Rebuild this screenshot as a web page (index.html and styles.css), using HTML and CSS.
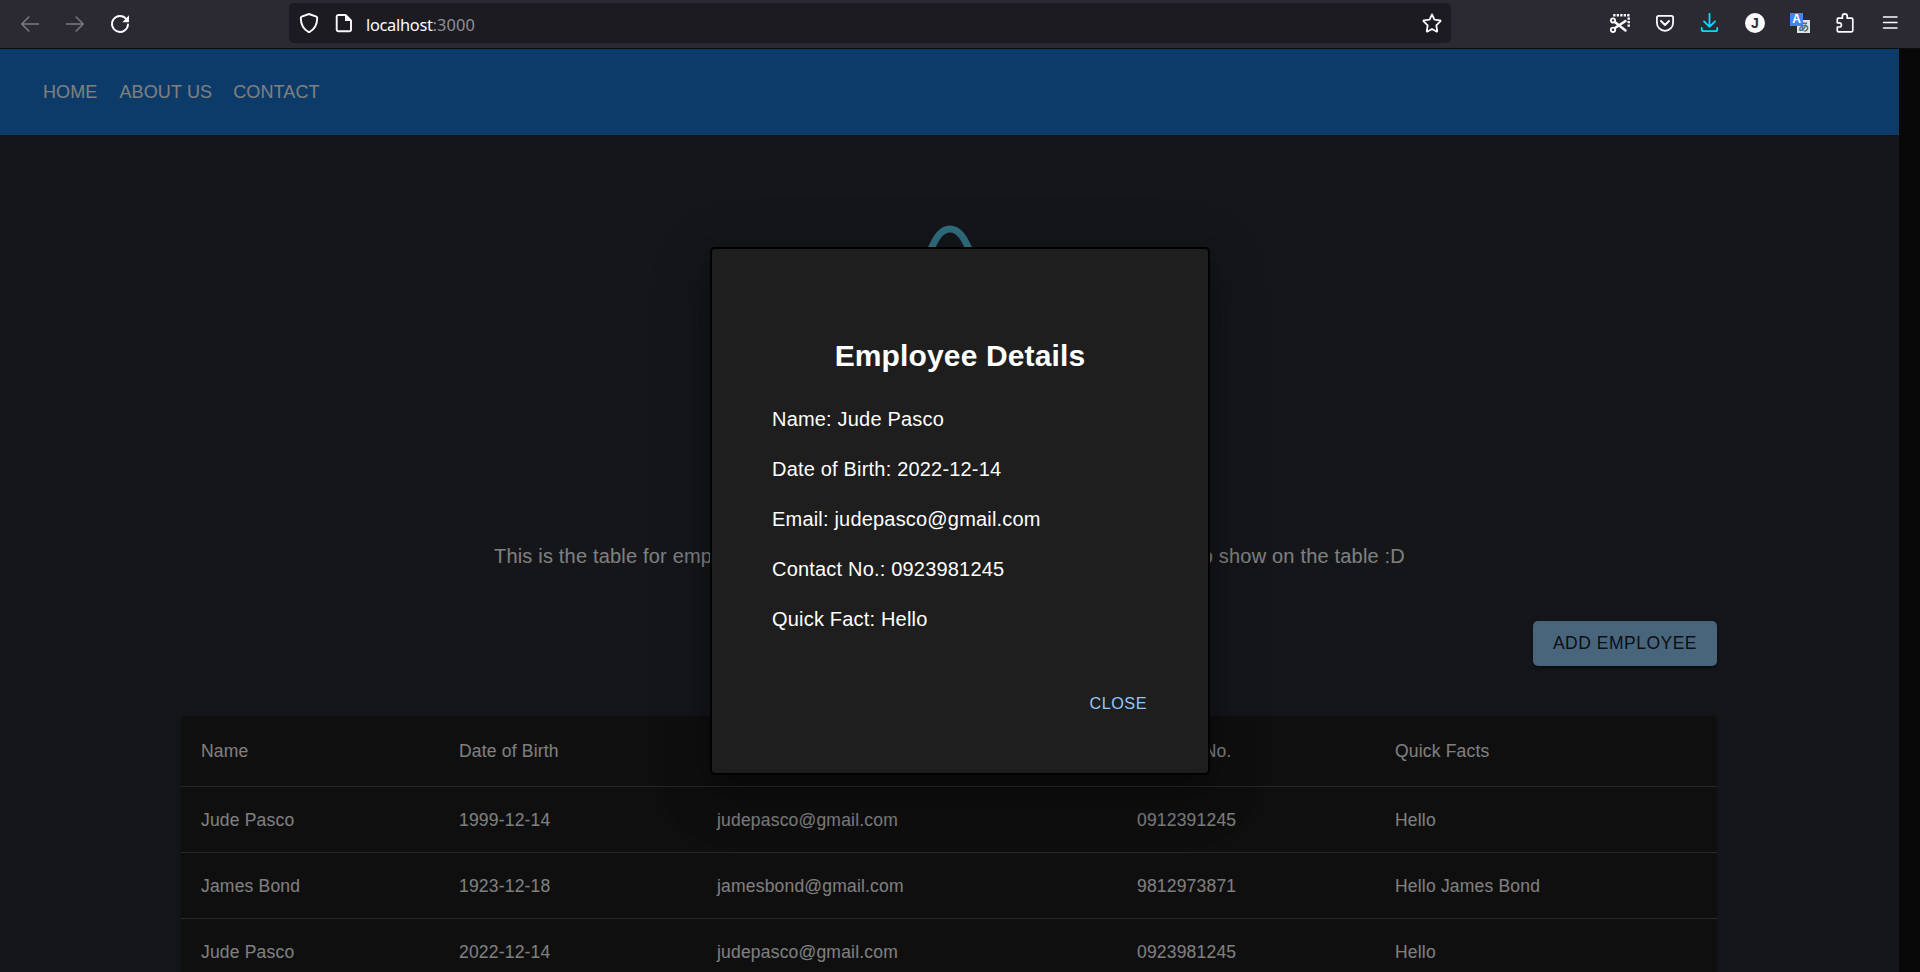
FILE: index.html
```html
<!DOCTYPE html>
<html lang="en">
<head>
<meta charset="utf-8">
<title>Employees</title>
<link rel="stylesheet" href="styles.css">
</head>
<body>
<header class="toolbar">
  <div class="nav-buttons">
    <svg class="icon dim" width="20" height="20" viewBox="0 0 20 20"><path d="M18.5 10H2M8.8 3L1.8 10l7 7"/></svg>
    <svg class="icon dim" width="20" height="20" viewBox="0 0 20 20"><path d="M1.5 10H18M11.2 3l7 7-7 7"/></svg>
    <svg class="icon" width="20" height="20" viewBox="0 0 20 20"><path d="M16.3 5A8 8 0 1 0 18 10.500" stroke-width="1.9"/><path d="M19 1.200v6.300a.8.8 0 0 1-.8.8H12.400z" fill="#fbfbfe" stroke="none"/></svg>
  </div>
  <div class="urlbar">
    <svg class="icon" width="20" height="20" viewBox="0 0 20 20"><path d="M10 1L17.400 3.600Q18.200 4 18.200 5C18.200 11.500 15.500 16.500 10 19.300C4.500 16.500 1.800 11.500 1.800 5Q1.800 4 2.600 3.600z" stroke-width="1.9"/></svg>
    <svg class="icon page-icon" width="20" height="20" viewBox="0 0 20 20"><path d="M4.500 2H11.500L17 7.500V16.500a1.800 1.800 0 0 1-1.800 1.800H4.500a1.800 1.800 0 0 1-1.800-1.800V3.800A1.800 1.800 0 0 1 4.500 2z" stroke-width="1.9"/><path d="M11 2v6h6z" fill="#fbfbfe" stroke="none"/></svg>
    <span class="url">localhost<span class="port">:3000</span></span>
    <svg class="icon star" width="20" height="20" viewBox="0 0 20 20"><path d="M10 1.400l2.400 5.200 5.600.8q1 .2.300 1l-4 4 .9 5.500q.1 1-.8.600L10 15.900l-4.400 2.600q-.9.400-.8-.6l.9-5.500-4-4q-.7-.8.300-1l5.600-.8z" stroke-width="1.8"/></svg>
  </div>
  <div class="actions">
    <svg class="icon" width="20" height="20" viewBox="0 0 20 20"><g stroke-width="1.900"><path d="M3.200 2.200H19.900" stroke-dasharray="2.300 1.200" stroke-linecap="butt" stroke-width="2.400"/><path d="M18.700 4.500v10" stroke-dasharray="2.300 1.200" stroke-linecap="butt" stroke-width="2.400"/><circle cx="3" cy="7.500" r="2.100"/><circle cx="3" cy="16.800" r="2.200"/></g><path d="M4.800 9l10.700 8.500M5 15L15.500 8" stroke-width="2.500"/></svg>
    <svg class="icon" width="20" height="20" viewBox="0 0 20 20"><path d="M3.500 2.900h13a1.600 1.600 0 0 1 1.600 1.600V9.700a8.100 8.100 0 0 1-16.200 0V4.500a1.600 1.600 0 0 1 1.600-1.600z" stroke-width="1.800"/><path d="M6 8l4 4 4-4" stroke-width="2"/></svg>
    <svg class="icon download" width="20" height="20" viewBox="0 0 20 20"><path d="M9.500 .8v13M4 8.300L9.500 13.800l5.500-5.500M1.700 14.800v1.400a2 2 0 0 0 2 2h11.600a2 2 0 0 0 2-2v-1.400" stroke-width="1.800"/></svg>
    <span class="avatar">J</span>
    <span class="translate"><span class="tr-a">A</span><span class="tr-b">あ</span></span>
    <svg class="icon" width="20" height="20" viewBox="0 0 20 20"><path d="M2.300 7.500V6.200q0-1 1-1H7.400V3.300a2.400 2.400 0 0 1 4.800 0V5.200H16.500q1.300 0 1.300 1.300V17.500q0 1.300-1.300 1.300H3.500q-1.200 0-1.200-1.200V14h2a2.100 2.100 0 0 0 0-4.200H2.300z" stroke-width="1.700"/></svg>
    <svg class="icon" width="20" height="20" viewBox="0 0 20 20"><path d="M3.500 4h13.500M3.500 9.500h13.500M3.500 15h13.500" stroke-width="1.500"/></svg>
  </div>
</header>
<div class="viewport">
  <main class="app">
    <nav class="navbar"><a>HOME</a><a>ABOUT US</a><a>CONTACT</a></nav>
    <svg class="logo" viewBox="-12 -12 24 24"><circle r="2.050" fill="#61dafb"/><g fill="none" stroke="#61dafb"><ellipse rx="4" ry="11"/><ellipse rx="4" ry="11" transform="rotate(60)"/><ellipse rx="4" ry="11" transform="rotate(120)"/></g></svg>
    <p class="intro"><span>This is the table for employees. Click the</span><span>button to add data to show on the table :D</span></p>
    <section class="content">
      <button class="add">ADD EMPLOYEE</button>
      <div class="table">
        <div class="row head"><span>Name</span><span>Date of Birth</span><span>Email</span><span>Contact No.</span><span>Quick Facts</span></div>
        <div class="row"><span>Jude Pasco</span><span>1999-12-14</span><span>judepasco@gmail.com</span><span>0912391245</span><span>Hello</span></div>
        <div class="row"><span>James Bond</span><span>1923-12-18</span><span>jamesbond@gmail.com</span><span>9812973871</span><span>Hello James Bond</span></div>
        <div class="row"><span>Jude Pasco</span><span>2022-12-14</span><span>judepasco@gmail.com</span><span>0923981245</span><span>Hello</span></div>
      </div>
    </section>
  </main>
  <div class="scrollbar"></div>
  <div class="backdrop">
    <div class="modal">
      <h2>Employee Details</h2>
      <p>Name: Jude Pasco</p>
      <p>Date of Birth: 2022-12-14</p>
      <p>Email: judepasco@gmail.com</p>
      <p>Contact No.: 0923981245</p>
      <p>Quick Fact: Hello</p>
      <button class="close">CLOSE</button>
    </div>
  </div>
</div>
</body>
</html>
```
FILE: styles.css
```css
* { box-sizing: border-box; }
body {
  margin: 0;
  height: 972px;
  overflow: hidden;
  display: flex;
  flex-direction: column;
  font-family: "Liberation Sans", Arial, sans-serif;
  color: #fff;
}
.toolbar {
  height: 49px;
  flex: none;
  display: flex;
  align-items: flex-start;
  background: #2b2a33;
  border-bottom: 1px solid #0c0c0d;
}
.icon {
  flex: none;
  fill: none;
  stroke: #fbfbfe;
  stroke-width: 1.5;
  stroke-linecap: round;
  stroke-linejoin: round;
}
.dim { stroke: #7c7b82; }
.nav-buttons { display: flex; gap: 25px; padding: 14px 0 0 20px; width: 289px; }
.urlbar {
  display: flex;
  align-items: center;
  width: 1162px;
  height: 40px;
  margin-top: 3px;
  padding: 0 9px 0 10px;
  border-radius: 5px;
  background: #1c1b22;
}
.page-icon { margin-left: 15px; }
.url {
  margin-left: 12px;
  padding-top: 3px;
  font-family: "Noto Sans", sans-serif;
  font-size: 16.400px;
  letter-spacing: -.3px;
  color: #fbfbfe;
}
.port { color: #8f8f96; letter-spacing: .1px; }
.star { margin-left: auto; }
.actions { display: flex; gap: 25px; padding: 13px 0 0 159px; }
.download { stroke: #00ddff; }
.avatar {
  width: 20px;
  height: 20px;
  border-radius: 50%;
  background: #fbfbfe;
  color: #2b2a33;
  font: bold 14px/20px "Liberation Sans", sans-serif;
  text-align: center;
}
.translate { display: grid; grid-template-columns: 7px 6px 7px; grid-template-rows: 7px 6px 7px; width: 20px; height: 20px; }
.tr-a { grid-area: 1 / 1 / 3 / 3; background: #4285f4; font: bold 12px/13px "Liberation Sans", sans-serif; text-align: center; z-index: 1; }
.tr-b { grid-area: 2 / 2 / 4 / 4; background: #dfe3e6; color: #4a6b7c; font: bold 11px/13px "Noto Sans CJK JP", sans-serif; text-align: center; }
.viewport { position: relative; flex: 1; display: flex; overflow: hidden; background: #282c34; }
.app { flex: 1; display: flex; flex-direction: column; align-items: center; }
.scrollbar { width: 21px; background: #101010; }
.navbar {
  width: 100%;
  height: 86px;
  flex: none;
  display: flex;
  align-items: center;
  gap: 21px;
  padding-left: 43px;
  background: #1976d2;
  font-size: 18px;
  letter-spacing: .12px;
}
.navbar a:first-child { margin-right: 1px; }
.logo { flex: none; width: 168px; height: 168px; margin-top: 87px; }
.intro {
  width: 911px;
  flex: none;
  display: flex;
  justify-content: space-between;
  margin: 154px 0 0;
  font-size: 20px;
  line-height: 24px;
  letter-spacing: .19px;
  white-space: nowrap;
}
.content { width: 1537px; padding-right: 1px; margin-top: 53px; display: flex; flex-direction: column; align-items: flex-end; }
button { border: 0; font-family: inherit; letter-spacing: .5px; }
.add {
  width: 184px;
  height: 45px;
  flex: none;
  padding: 0;
  border-radius: 5px;
  background: #90caf9;
  color: rgba(0, 0, 0, .87);
  font-size: 17.500px;
  box-shadow: 0 3px 3px -1px rgba(0,0,0,.3), 0 2px 3px rgba(0,0,0,.2), 0 1px 6px rgba(0,0,0,.15);
}
.table {
  width: 100%;
  margin-top: 50px;
  border-radius: 5px;
  background: #1e1e1e;
  box-shadow: 0 2px 4px rgba(0,0,0,.2);
  font-size: 17.500px;
  letter-spacing: .19px;
}
.row {
  display: grid;
  grid-template-columns: 258px 258px 420px 258px 1fr;
  height: 66px;
  align-items: center;
  padding: 2px 0 0 20px;
  border-bottom: 1px solid #515151;
}
.head { height: 71px; padding-top: 0; }
.backdrop {
  position: absolute;
  inset: 0;
  display: flex;
  align-items: center;
  justify-content: center;
  background: rgba(0, 0, 0, .5);
}
.modal {
  width: 500px;
  height: 528px;
  display: flex;
  flex-direction: column;
  padding: 89px 60px 0;
  border: 2px solid #000;
  border-radius: 5px;
  background: #1e1e1e;
  box-shadow: 0 14px 19px -9px rgba(0,0,0,.2), 0 30px 48px 4px rgba(0,0,0,.14), 0 11px 58px 10px rgba(0,0,0,.12);
}
.modal h2 { margin: 0 0 20px; font-size: 30px; line-height: 36px; letter-spacing: .14px; text-align: center; }
.modal p { margin: 0; font-size: 20px; line-height: 50px; letter-spacing: .19px; }
.close {
  align-self: flex-end;
  margin: 40px 1px 0 0;
  padding: 5px 0;
  background: none;
  color: #90caf9;
  font-size: 16.250px;
  line-height: 28px;
}
```
